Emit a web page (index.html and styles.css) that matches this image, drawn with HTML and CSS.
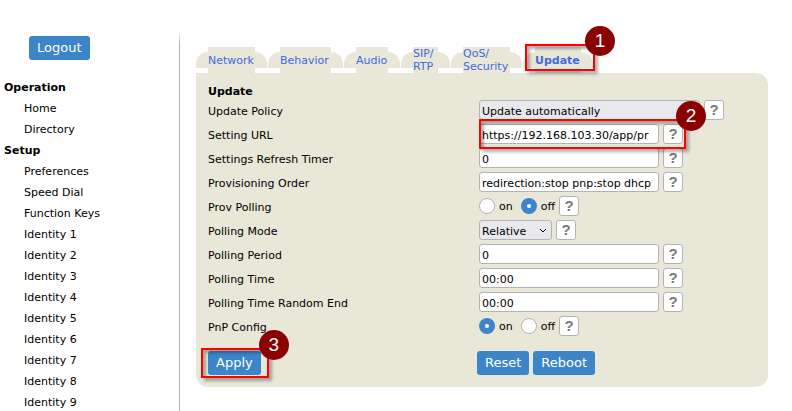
FILE: index.html
```html
<!DOCTYPE html>
<html lang="en">
<head>
<meta charset="utf-8">
<title>Update</title>
<link rel="stylesheet" href="styles.css">
</head>
<body>
<div class="page">
  <aside class="sidebar">
    <button class="btn logout" type="button">Logout</button>
    <nav class="menu">
      <h2>Operation</h2>
      <a href="#">Home</a>
      <a href="#">Directory</a>
      <h2>Setup</h2>
      <a href="#">Preferences</a>
      <a href="#">Speed Dial</a>
      <a href="#">Function Keys</a>
      <a href="#">Identity 1</a>
      <a href="#">Identity 2</a>
      <a href="#">Identity 3</a>
      <a href="#">Identity 4</a>
      <a href="#">Identity 5</a>
      <a href="#">Identity 6</a>
      <a href="#">Identity 7</a>
      <a href="#">Identity 8</a>
      <a href="#">Identity 9</a>
    </nav>
  </aside>
  <main class="content">
    <nav class="tabs">
      <a class="tab" href="#"><span>Network</span></a>
      <a class="tab" href="#"><span>Behavior</span></a>
      <a class="tab" href="#"><span>Audio</span></a>
      <a class="tab" href="#"><span>SIP/<br>RTP</span></a>
      <a class="tab" href="#"><span>QoS/<br>Security</span></a>
      <a class="tab current" href="#"><span>Update</span><i class="mark mark-tab"><b class="step">1</b></i></a>
    </nav>
    <form class="panel">
      <h1>Update</h1>
      <div class="row">
        <label class="name" for="policy">Update Policy</label>
        <div class="field">
          <div class="select wide">
            <select id="policy"><option>Update automatically</option></select>
            <svg viewBox="0 0 8 6"><path d="M1 1l3 3 3-3"/></svg>
          </div>
          <button class="help" type="button">?</button>
        </div>
      </div>
      <div class="row">
        <label class="name" for="url">Setting URL</label>
        <div class="field">
          <input class="text" id="url" type="text" value="https://192.168.103.30/app/pr">
          <button class="help" type="button">?</button>
          <i class="mark mark-field"><b class="step">2</b></i>
        </div>
      </div>
      <div class="row">
        <label class="name" for="refresh">Settings Refresh Timer</label>
        <div class="field">
          <input class="text" id="refresh" type="text" value="0">
          <button class="help" type="button">?</button>
        </div>
      </div>
      <div class="row">
        <label class="name" for="order">Provisioning Order</label>
        <div class="field">
          <input class="text" id="order" type="text" value="redirection:stop pnp:stop dhcp">
          <button class="help" type="button">?</button>
        </div>
      </div>
      <div class="row">
        <span class="name">Prov Polling</span>
        <div class="field">
          <label class="choice"><input type="radio" name="polling">on</label>
          <label class="choice"><input type="radio" name="polling" checked>off</label>
          <button class="help" type="button">?</button>
        </div>
      </div>
      <div class="row">
        <label class="name" for="mode">Polling Mode</label>
        <div class="field">
          <div class="select">
            <select id="mode"><option>Relative</option></select>
            <svg viewBox="0 0 8 6"><path d="M1 1l3 3 3-3"/></svg>
          </div>
          <button class="help" type="button">?</button>
        </div>
      </div>
      <div class="row">
        <label class="name" for="period">Polling Period</label>
        <div class="field">
          <input class="text" id="period" type="text" value="0">
          <button class="help" type="button">?</button>
        </div>
      </div>
      <div class="row">
        <label class="name" for="time">Polling Time</label>
        <div class="field">
          <input class="text" id="time" type="text" value="00:00">
          <button class="help" type="button">?</button>
        </div>
      </div>
      <div class="row">
        <label class="name" for="end">Polling Time Random End</label>
        <div class="field">
          <input class="text" id="end" type="text" value="00:00">
          <button class="help" type="button">?</button>
        </div>
      </div>
      <div class="row">
        <span class="name">PnP Config</span>
        <div class="field">
          <label class="choice"><input type="radio" name="pnp" checked>on</label>
          <label class="choice"><input type="radio" name="pnp">off</label>
          <button class="help" type="button">?</button>
        </div>
      </div>
      <div class="actions">
        <div class="apply">
          <button class="btn" type="button">Apply</button>
          <i class="mark mark-apply"><b class="step">3</b></i>
        </div>
        <div class="restart">
          <button class="btn" type="button">Reset</button>
          <button class="btn" type="button">Reboot</button>
        </div>
      </div>
    </form>
  </main>
</div>
</body>
</html>
```
FILE: styles.css
```css
* { box-sizing: border-box; }

html { overflow: hidden; }

body {
  margin: 0;
  background: #fff;
  color: #000;
  font: 11px/13px Verdana, "DejaVu Sans", sans-serif;
}

button, input, select { margin: 0; font: inherit; color: inherit; }

.page {
  display: grid;
  grid-template-columns: 180px minmax(0, 1fr);
  min-height: 100vh;
}

.sidebar {
  padding: 36px 0 0 4px;
  border-right: 1px solid;
  border-image: linear-gradient(transparent 32px, #b4b4aa 44px) 1;
}

.btn {
  height: 24px;
  padding: 0 8px;
  border: 0;
  border-radius: 3px;
  background: #3d85c9;
  color: #fff;
  font-size: 13px;
  line-height: 24px;
}

.logout { margin-left: 25px; }

.menu {
  display: flex;
  flex-direction: column;
  margin-top: 17px;
  line-height: 21px;
}

.menu h2 { margin: 0; font-size: 11px; }
.menu a { padding-left: 20px; color: #000; text-decoration: none; }

.content { padding: 47px 24px 24px 16px; }

.tabs {
  display: grid;
  grid-template-columns: 71px 75px 56px 49px 71px 70px;
  gap: 1px;
}

.tab {
  position: relative;
  display: flex;
  align-items: flex-start;
  color: #4169e1;
  text-decoration: none;
}

.tab span {
  display: flex;
  flex: 1;
  align-items: center;
  height: 26px;
  background: #e9e7d8;
}

.tab::before, .tab::after {
  content: "";
  width: 12px;
  height: 16px;
  margin-top: 5px;
  background: #e9e7d8;
}

.tab::before { border-top-left-radius: 12px; }
.tab::after { border-top-right-radius: 12px; }
.current { font-weight: bold; }

.panel {
  padding: 12px;
  border-radius: 0 12px 12px 12px;
  background: #e9e7d8;
}

.panel h1 { margin: 0; font-size: 11px; line-height: 13px; }

.row {
  display: grid;
  grid-template-columns: 271px minmax(0, 1fr);
  align-items: center;
  height: 24px;
}

.name { padding-top: 2px; }

.field {
  position: relative;
  display: flex;
  align-items: center;
  gap: 4px;
  justify-self: start;
}

.text, .select select, .help {
  height: 20px;
  border: 1px solid #b3b3b3;
  border-radius: 3px;
  background: #fff;
}

.text { width: 180px; padding: 2px 2px 0; }

.select { position: relative; width: 73px; }
.select.wide { width: 221px; }
.select select {
  display: block;
  width: 100%;
  padding: 2px 2px 0;
  background: #e9e9ed;
  appearance: none;
}

.select svg {
  position: absolute;
  right: 5px;
  top: 8px;
  width: 8px;
  height: 6px;
  fill: none;
  stroke: #000;
  pointer-events: none;
}

.help {
  width: 20px;
  padding: 0;
  color: #777;
  font: bold 15px/18px "Liberation Sans", Arial, sans-serif;
}

.choice { display: flex; align-items: center; gap: 4px; }
.choice + .choice { margin-left: 4px; }

.choice input {
  width: 16px;
  height: 16px;
  border: 1px solid #b3b3b3;
  border-radius: 50%;
  background: #fff;
  appearance: none;
}

.choice input:checked {
  border: 6px solid #3d85c9;
}

.actions {
  display: grid;
  grid-template-columns: 269px 1fr;
  margin-top: 13px;
}

.apply { position: relative; justify-self: start; }
.restart { display: flex; gap: 4px; }

.mark {
  position: absolute;
  z-index: 1;
  border: 2px solid #f00;
  box-shadow: 3px 3px 3px rgba(0, 0, 0, .3), inset 3px 3px 3px rgba(0, 0, 0, .3);
  pointer-events: none;
}

.mark-tab { inset: -3px -2px 2px 2px; }
.mark-field { inset: -5px -3px -5px 0; }
.mark-apply { inset: -3px -8px -3px -7px; }

.step {
  position: absolute;
  top: -20px;
  right: -22px;
  width: 30px;
  height: 30px;
  border-radius: 50%;
  background: #8b0000;
  color: #fff;
  font: 19px/30px "Liberation Sans", Arial, sans-serif;
  text-align: center;
}
```
